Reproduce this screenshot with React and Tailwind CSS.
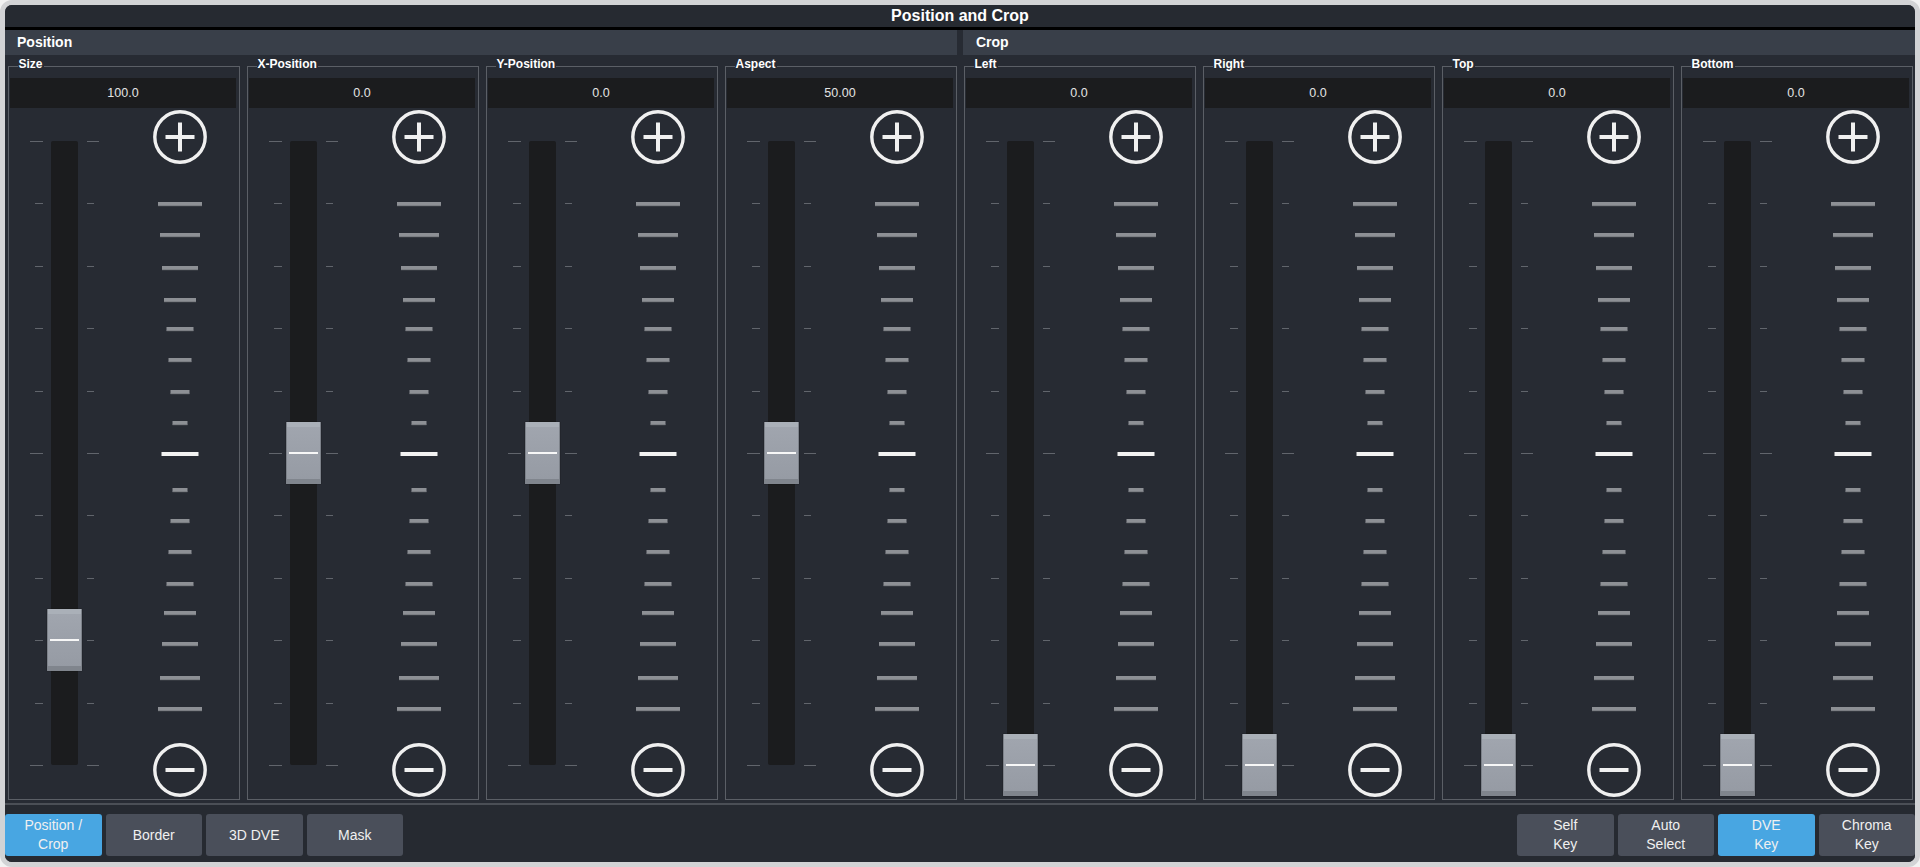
import React from "react";

const FONT = { fontFamily: '"Liberation Sans", Arial, sans-serif' };

const TICK0 = 33;
const TICKSTEP = 62.4;

const BARS = [
  [40, 44], [71, 40], [104, 36], [136, 32], [165, 27], [196, 23], [228, 19], [259, 15],
  [290, 37, true],
  [326, 15], [357, 19], [388, 23], [420, 27], [449, 32], [480, 36], [514, 40], [545, 44],
];

function RoundIcon({ plus }) {
  return (
    <svg width="54" height="54" viewBox="0 0 54 54" className="shrink-0">
      <circle cx="27" cy="27" r="25.2" fill="none" stroke="#f0f0f0" strokeWidth="3.4" />
      <rect x="12.5" y="25" width="29" height="4" fill="#f0f0f0" />
      {plus && <rect x="25" y="12.5" width="4" height="29" fill="#f0f0f0" />}
    </svg>
  );
}

function Scale() {
  return (
    <svg width="60" height="579" viewBox="0 0 60 579" className="shrink-0">
      {BARS.map(([c, w, hi], i) => (
        <g key={i}>
          <rect x={30 - w / 2} y={c - 2} width={w} height="4" fill={hi ? "#f2f2f2" : "#8d9095"} />
          {!hi && <rect x={30 - w / 2} y={c + 1.5} width={w} height="0.7" fill="#6c6f74" />}
        </g>
      ))}
    </svg>
  );
}

function Track({ knob }) {
  const ticks = Array.from({ length: 11 }, (_, k) => Math.round(TICK0 + k * TICKSTEP));
  const top = TICK0 + knob * TICKSTEP - 31;
  return (
    <div className="relative w-[113px] h-full shrink-0">
      <svg width="113" height="690" viewBox="0 0 113 690" className="block">
        {ticks.map((y, k) => {
          const long = k === 0 || k === 5 || k === 10;
          return (
            <g key={k} fill="#61656c">
              <rect x={long ? 20 : 25} y={y} width={long ? 13 : 8} height="1" />
              <rect x="77" y={y} width={long ? 12 : 7} height="1" />
            </g>
          );
        })}
        <rect x="41" y="33" width="27" height="624" rx="2" fill="#1b1c1e" />
      </svg>
      <div
        className="absolute left-[37px] w-[35px] h-[62px] flex flex-col border-x border-[#7d828a] shadow-[0_0_1px_rgba(0,0,0,0.6)]"
        style={{ top }}
      >
        <div className="h-[5px] bg-[#aab0b8]" />
        <div className="flex-1 bg-gradient-to-b from-[#a0a5ae] to-[#969ba4] flex items-center justify-center">
          <div className="h-[2px] w-[29px] bg-[#f7f7f7]" />
        </div>
        <div className="h-[5px] bg-[#80858d]" />
      </div>
    </div>
  );
}

function Fader({ label, value, knob }) {
  return (
    <div className="relative w-[232px] h-[734px] border border-[#5b5f66] pt-[11.5px] pl-[1.5px] pr-[2.5px] flex flex-col">
      <div className="absolute left-[9px] top-[-10px] px-[1px] bg-[#272b33] text-white font-bold text-[12px] leading-[14px]">
        {label}
      </div>
      <div className="h-[30px] bg-[#1b1c1e] flex items-center justify-center text-[#e4e4e4] text-[12.5px] shrink-0">
        {value}
      </div>
      <div className="h-[690px] flex">
        <Track knob={knob} />
        <div className="flex-1 flex flex-col items-center pt-[2px]">
          <RoundIcon plus />
          <Scale />
          <RoundIcon />
        </div>
      </div>
    </div>
  );
}

function Section({ title, pl, children }) {
  return (
    <div className="w-[952px] flex flex-col">
      <div className="h-[25px] bg-[#393f49] flex items-center text-white font-bold text-[14px]" style={{ paddingLeft: pl }}>
        {title}
      </div>
      <div className={"flex gap-[7px] mt-[10.5px] " + (title === "Position" ? "pl-[2.5px]" : "pl-[0.5px]")}>{children}</div>
    </div>
  );
}

function Btn({ active, children }) {
  return (
    <div
      className={
        "w-[96.5px] h-[42px] rounded-[3px] flex flex-col items-center justify-center text-[14px] leading-[19px] text-[#f0f0f0] " +
        (active ? "bg-[#48a6e2]" : "bg-[#4a4f5a]")
      }
    >
      {children}
    </div>
  );
}

export default function App() {
  return (
    <div className="w-[1920px] h-[867px] bg-[#f2f2f2]" style={FONT}>
      <div className="w-full h-full rounded-[12px] border-[5px] border-[#d2d3d5] bg-[#272b33] flex flex-col overflow-hidden">
        <div className="h-[25px] shrink-0 border-b-[3px] border-black bg-[#262a31] flex items-center justify-center text-white font-bold text-[16px]">
          Position and Crop
        </div>
        <div className="flex gap-[6px] shrink-0">
          <Section title="Position" pl="12px">
            <Fader label="Size" value="100.0" knob={8} />
            <Fader label="X-Position" value="0.0" knob={5} />
            <Fader label="Y-Position" value="0.0" knob={5} />
            <Fader label="Aspect" value="50.00" knob={5} />
          </Section>
          <Section title="Crop" pl="13px">
            <Fader label="Left" value="0.0" knob={10} />
            <Fader label="Right" value="0.0" knob={10} />
            <Fader label="Top" value="0.0" knob={10} />
            <Fader label="Bottom" value="0.0" knob={10} />
          </Section>
        </div>
        <div className="mt-[3px] h-[2.5px] bg-[#4b4f56] shrink-0" />
        <div className="flex-1 flex justify-between pt-[9px] pb-[6px] bg-[#262a31]">
          <div className="flex gap-[4px]">
            <Btn active>
              <span>Position /</span>
              <span>Crop</span>
            </Btn>
            <Btn>Border</Btn>
            <Btn>3D DVE</Btn>
            <Btn>Mask</Btn>
          </div>
          <div className="flex gap-[4px]">
            <Btn>
              <span>Self</span>
              <span>Key</span>
            </Btn>
            <Btn>
              <span>Auto</span>
              <span>Select</span>
            </Btn>
            <Btn active>
              <span>DVE</span>
              <span>Key</span>
            </Btn>
            <Btn>
              <span>Chroma</span>
              <span>Key</span>
            </Btn>
          </div>
        </div>
      </div>
    </div>
  );
}
